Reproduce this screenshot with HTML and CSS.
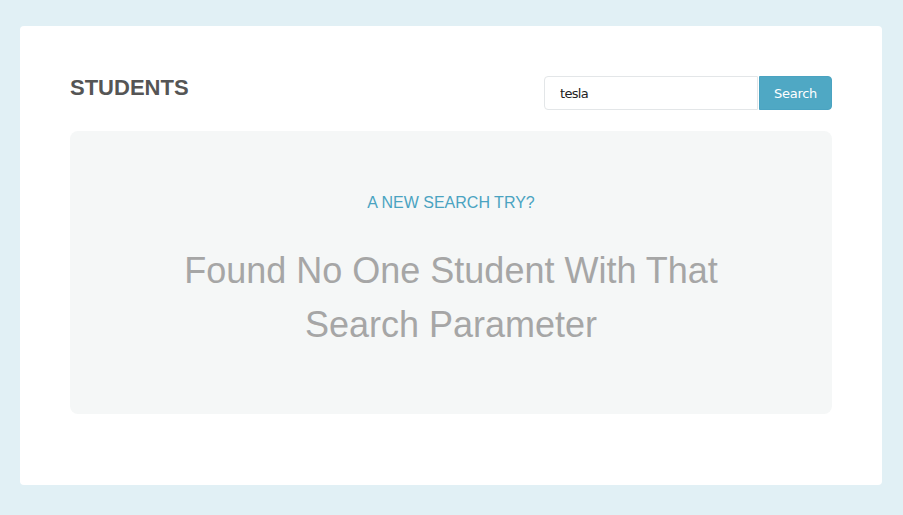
FILE: index.html
```html
<!DOCTYPE html>
<html>
<head>
<meta charset="utf-8">
<link rel="stylesheet" href="styles.css">
</head>
<body>
<div class="page">
  <div class="card">
    <div class="header">
      <h1 class="title">STUDENTS</h1>
      <form class="search">
        <input class="search-input" type="text" value="tesla">
        <button class="search-btn" type="button">Search</button>
      </form>
    </div>
    <div class="empty">
      <div class="empty-kicker">A NEW SEARCH TRY?</div>
      <div class="empty-msg">Found No One Student With That<br>Search Parameter</div>
    </div>
  </div>
</div>
</body>
</html>
```
FILE: styles.css
```css
html, body {
  margin: 0;
  padding: 0;
  background: #e1f0f5;
  font-family: "Liberation Sans", Arial, sans-serif;
}
.page {
  padding: 26px 21px 30px 20px;
}
.card {
  background: #ffffff;
  border-radius: 4px;
  height: 459px;
  box-sizing: border-box;
  padding: 50px 50px 0 50px;
}
.header {
  display: flex;
  justify-content: space-between;
  align-items: flex-start;
  height: 34px;
}
.title {
  margin: 0;
  padding-top: 0;
  font-size: 22px;
  font-weight: bold;
  color: #555555;
  line-height: 24px;
}
.search {
  display: flex;
  margin: 0;
}
.search-input {
  box-sizing: border-box;
  width: 214px;
  height: 34px;
  border: 1px solid #e3e6e8;
  border-radius: 4px 0 0 4px;
  padding: 0 15px;
  font-family: "DejaVu Sans", Tahoma, sans-serif;
  font-size: 13px;
  color: #222;
  outline: none;
  letter-spacing: -0.7px;
}
.search-btn {
  box-sizing: border-box;
  width: 73px;
  height: 34px;
  margin-left: 1px;
  border: 1px solid #4aa3c1;
  border-radius: 0 4px 4px 0;
  background: #4fa8c4;
  color: #ffffff;
  font-family: "DejaVu Sans", Tahoma, sans-serif;
  font-size: 13px;
  letter-spacing: -0.3px;
}
.empty {
  margin-top: 21px;
  height: 283px;
  background: #f5f7f7;
  border-radius: 8px;
  text-align: center;
  box-sizing: border-box;
  padding-top: 62px;
}
.empty-kicker {
  color: #4aa3c1;
  font-size: 16px;
  line-height: 20px;
}
.empty-msg {
  margin-top: 31px;
  color: #a6a6a6;
  font-size: 36px;
  line-height: 54px;
}
```
